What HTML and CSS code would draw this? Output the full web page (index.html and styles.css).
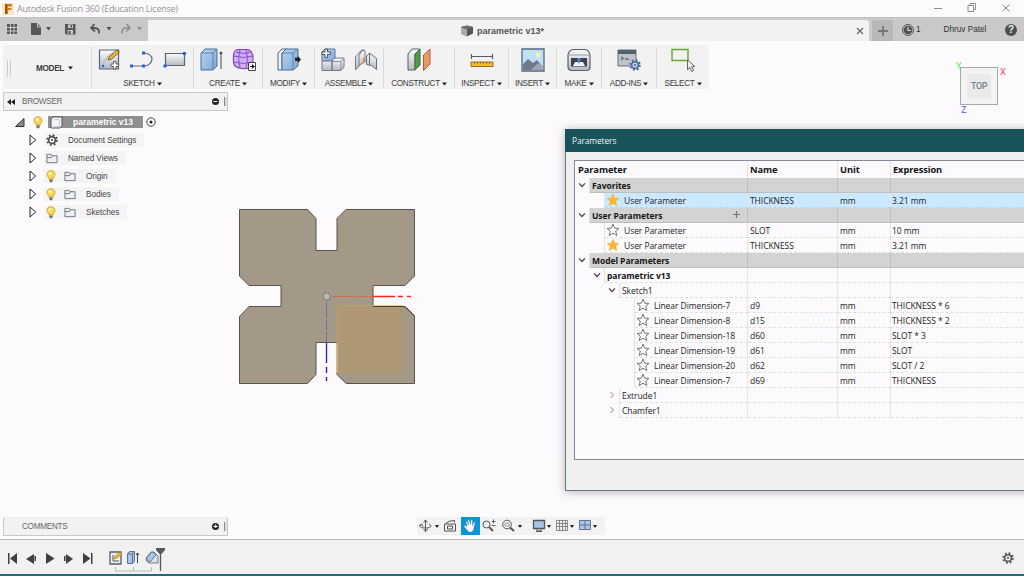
FILE: index.html
```html
<!DOCTYPE html>
<html lang="en">
<head>
<meta charset="utf-8">
<title>Autodesk Fusion 360 (Education License)</title>
<link rel="stylesheet" href="styles.css">
</head>
<body>
<svg class="defs" aria-hidden="true">
  <defs>
    <linearGradient id="steel" x1="0" y1="0" x2="0" y2="1"><stop offset="0" stop-color="#fafbfd"/><stop offset="1" stop-color="#b4b9c2"/></linearGradient>
    <linearGradient id="blue" x1="0" y1="0" x2="1" y2="1"><stop offset="0" stop-color="#b9d5f2"/><stop offset="1" stop-color="#7ca8d8"/></linearGradient>
    <symbol id="star" viewBox="0 0 14 14"><path d="M7 1 8.7 5.2 13 5.4 9.7 8.2 10.8 12.6 7 10.2 3.2 12.6 4.3 8.2 1 5.4 5.3 5.2Z" stroke-linejoin="miter"/></symbol>
    <symbol id="down" viewBox="0 0 8 8"><path d="M1 2.3 4 5.5 7 2.3" fill="none" stroke="#444" stroke-width="1.2"/></symbol>
    <symbol id="right" viewBox="0 0 8 8"><path d="M2.5 1 5.5 4 2.5 7" fill="none" stroke="#888" stroke-width="1"/></symbol>
    <symbol id="bulb" viewBox="0 0 10 13"><path d="M5 .7C2.5.7 1 2.4 1 4.5c0 2 1.6 2.6 2 4.5h4c.4-1.900 2-2.500 2-4.500C9 2.400 7.500.7 5 .7Z" fill="#fbd84b" stroke="#c49b35" stroke-width=".8"/><circle cx="4" cy="3.500" r="1.500" fill="#fff6b8"/><path d="M3.200 9.500h3.600v2H6L5.500 12.500h-1L4 11.500h-.8Z" fill="#77736b"/></symbol>
    <symbol id="folder" viewBox="0 0 13 11"><path d="M1 10V1h4.500l1 1.500H12V10Z" fill="#eceff3" stroke="#68727f"/><path d="M1 4.500h5l1-2" fill="none" stroke="#68727f"/></symbol>
    <symbol id="gear" viewBox="0 0 14 14"><circle cx="7" cy="7" r="5.600" fill="none" stroke="currentColor" stroke-width="2.200" stroke-dasharray="2.200 2.198"/><circle cx="7" cy="7" r="3.900" fill="none" stroke="currentColor" stroke-width="1.800"/><circle cx="7" cy="7" r="1.300" fill="currentColor"/></symbol>
    <symbol id="tri" viewBox="0 0 8 12"><path d="M1 1v10l5.700-5Z" fill="#fcfafc" stroke="#222" stroke-width="1"/></symbol>
    <symbol id="caret" viewBox="0 0 5 4"><path d="M0 .5h5L2.500 3.500Z" fill="currentColor"/></symbol>
  </defs>
</svg>

<div class="app">
  <header class="titlebar">
    <svg class="logo" width="12" height="12" viewBox="0 0 12 12"><rect width="12" height="12" fill="#f8e6cc"/><path d="M3 1h7v2.500H6V5h3.500v2H6v4H3Z" fill="#d97816"/><path d="M3 1h2v10H3Z" fill="#9b5414"/></svg>
    <span class="app-name">Autodesk Fusion 360 (Education License)</span>
    <svg class="win-btns" width="78" height="12" viewBox="0 0 78 12" fill="none" stroke="#8d8b8e"><path d="M1 7.500h8"/><path d="M35 4.500h5.500v6H35ZM37 4V2.500h5.500v6H41M69.500 3.500l7 7m0-7-7 7"/></svg>
  </header>

  <div class="tabbar">
    <div class="quick">
      <svg width="148" height="24" viewBox="0 0 148 24">
        <path d="M7 7h3v3H7ZM11 7h2.500v3H11ZM14.500 7h2.500v3h-2.500ZM7 11h3v2.500H7ZM11 11h2.500v2.500H11ZM14.500 11h2.500v2.500h-2.500ZM7 14.500h3V17H7ZM11 14.500h2.500V17H11ZM14.500 14.500h2.500V17h-2.500Z" fill="#565656"/>
        <path d="M31 6h6l4 4v8H31Z" fill="#565656"/><path d="M37.500 6v4H41" fill="none" stroke="#c8c8c8"/>
        <path d="M46 10h5l-2.500 3.500ZM106.500 10h5l-2.500 3.500Z" fill="#505050"/><path d="M137 10h5l-2.500 3.500Z" fill="#8e8e8e"/>
        <path d="M65 7h10.500v10.500H66L65 16.500Z" fill="#565656"/><path d="M68 7.500h5v3.500h-5ZM67.500 13h5.500v4h-5.500Z" fill="#c8c8c8"/><path d="M68.500 14h2v3h-2ZM70.500 8h1.500v2.500h-1.500Z" fill="#565656"/>
        <path d="M94.500 7 91 11l4 3.500M91 11h4.500q4 .5 3.500 5.500" fill="none" stroke="#565656" stroke-width="1.800"/>
        <path d="M126.500 7l3.500 4-4 3.500M130 11h-4.500q-4 .5-3.500 5.500" fill="none" stroke="#8e8e8e" stroke-width="1.600"/>
      </svg>
    </div>
    <div class="doc-tab">
      <svg width="12" height="12" viewBox="0 0 12 12"><path d="M0 2 6 .5 12 2v6.500L6 11.500 0 8.500Z" fill="#555"/><path d="M0 2l6 2.500v7L0 8.500Z" fill="#aaa"/><path d="M0 2 6 .5 12 2 6 4.500Z" fill="#6d6d6d"/></svg>
      <span class="doc-name">parametric v13*</span>
      <svg class="tab-close" width="8" height="8" viewBox="0 0 8 8"><path d="M1 1l6 6m0-6L1 7" stroke="#666" stroke-width="1.200"/></svg>
    </div>
    <div class="tab-add"><svg width="12" height="12" viewBox="0 0 12 12"><path d="M6 1v10M1 6h10" stroke="#777" stroke-width="1.800"/></svg></div>
    <div class="account">
      <svg width="12" height="12" viewBox="0 0 12 12"><circle cx="6" cy="6" r="5.500" fill="none" stroke="#555"/><circle cx="6" cy="6" r="4.300" fill="#505050"/><path d="M6 3v3.500h3" fill="none" stroke="#ddd" stroke-width="1.200"/></svg>
      <span class="jobs">1</span><span class="user">Dhruv Patel</span>
      <span class="help">?</span>
    </div>
  </div>

  <main class="workspace">
    <nav class="toolbar">
      <div class="workspace-switch"><i class="grip"></i><b>MODEL</b><svg class="car" ><use href="#caret"/></svg></div>
      <div class="group"><div class="icons wide">
        <svg width="23" height="24" viewBox="0 0 23 24"><path d="M1.500 2h19v19h-19Z" fill="url(#steel)" stroke="#5e6470" stroke-width="1.200"/><path d="M5 18C6 11 10 7 16 5" fill="none" stroke="#a8adb6"/><path d="M10 12l1-3 8-7 2.500 2-8 7Z" fill="#f5b631" stroke="#554b33" stroke-width=".8"/><circle cx="5" cy="18" r="1.300" fill="#2264d6"/><path d="M15.500 13.500H18V16h2.500v2.500H18V21h-2.500v-2.500H13V16h2.500Z" fill="#fff" stroke="#555" stroke-width=".9"/></svg>
        <svg width="24" height="24" viewBox="0 0 24 24"><path d="M2 18h11M13 5c6 0 9 3 9 6s-3 7-8 7" fill="none" stroke="#606977" stroke-width="1.200"/><path d="M0 16.500h3V19.500H0ZM12 3.500h3V6.500H12ZM12 16.500h3V19.500H12Z" fill="#2264d6"/></svg>
        <svg width="24" height="24" viewBox="0 0 24 24"><path d="M2.500 5.500h19v12h-19Z" fill="url(#steel)" stroke="#5e6470" stroke-width="1.200"/><path d="M20 4h3V7H20ZM.5 16.500h3V19.500h-3Z" fill="#2264d6"/></svg>
      </div><span class="label">SKETCH<svg class="car"><use href="#caret"/></svg></span></div>
      <div class="group"><div class="icons wide">
        <svg width="23" height="24" viewBox="0 0 23 24"><path d="M1 5 5 1h12v17l-4 4H1Z" fill="url(#blue)" stroke="#4f6c90"/><path d="M1 5h12v17M13 5l4-4" fill="none" stroke="#5f7ea5"/><path d="M21 21V5" stroke="#444"/><path d="M21 3l1.800 3h-3.600Z" fill="#444"/></svg>
        <svg width="24" height="24" viewBox="0 0 24 24"><path d="M6 1.500h10q5 2 5 8t-2 9-9 2-8-4-.5-9T6 1.500Z" fill="#cfaef3" stroke="#7d43bd" stroke-width="1.100"/><path d="M8 2q-3 8 0 18M14 2q3 8 0 18M2 8q9 3 19 0M2 14q9 3 19 0M4 4q8 3 15 0" fill="none" stroke="#8850c4"/><path d="M16.500 14.500h7v8h-7Z" fill="#fff" stroke="#444"/><path d="M18 18h2v-2l3 2.500-3 2.500v-2h-2Z" fill="#222"/></svg>
      </div><span class="label">CREATE<svg class="car"><use href="#caret"/></svg></span></div>
      <div class="group"><div class="icons">
        <svg width="24" height="24" viewBox="0 0 24 24"><path d="M1 5 5 1h5L5 5v17H1Z" fill="#eef1f5" stroke="#566272"/><path d="M5 5l4-4h12v17l-5 4H5Z" fill="url(#blue)" stroke="#4f6c90"/><path d="M5 5h11v17M16 5l5-4" fill="none" stroke="#5f7ea5"/><path d="M18 9.500h3V8l3 3.500-3 3.500v-2h-3Z" fill="#222"/></svg>
      </div><span class="label">MODIFY<svg class="car"><use href="#caret"/></svg></span></div>
      <div class="group"><div class="icons wide">
        <svg width="24" height="24" viewBox="0 0 24 24"><path d="M1 13V4l3-3h10v9l-3 3Z" fill="url(#blue)" stroke="#5c7698"/><path d="M1 13h10V22.500H1ZM11 13l3-3h9v9l-3 3.500h-9Z" fill="url(#steel)" stroke="#747b86"/><path d="M11 13.500h9v8.500M20 13.500l3-3.500" fill="none" stroke="#878e99"/><path d="M4 1h2.500v3H9.500v2.500H6.500v3H4v-3H1V4h3Z" fill="#fff" stroke="#444" stroke-width=".9"/></svg>
        <svg width="24" height="24" viewBox="0 0 24 24"><path d="M1.500 9 7 2.500q3-2 4 .5v11l-4 2-5.500 6Z" fill="url(#steel)" stroke="#747b86"/><path d="M5 18V8q1-5 5-6" fill="none" stroke="#747b86"/><path d="M9.500 15v-5" stroke="#ed8038" stroke-width="1.500"/><path d="M12.500 8l3-3 7 5.500v11l-5-4-5-1Z" fill="url(#steel)" stroke="#656d78"/><path d="M15.500 5v12" stroke="#656d78"/></svg>
      </div><span class="label">ASSEMBLE<svg class="car"><use href="#caret"/></svg></span></div>
      <div class="group"><div class="icons">
        <svg width="24" height="24" viewBox="0 0 24 24"><path d="M1 6 5 1h8L8 6v16H1Z" fill="url(#steel)" stroke="#59616c"/><path d="M8 6l5-5v16l-5 5Z" fill="#559a48" stroke="#3e6a35"/><path d="M16.500 7 23 1v15l-6.500 6.500Z" fill="#e99767" stroke="#ad633b"/></svg>
      </div><span class="label">CONSTRUCT<svg class="car"><use href="#caret"/></svg></span></div>
      <div class="group"><div class="icons">
        <svg width="24" height="24" viewBox="0 0 24 24"><path d="M1.500 6v5m21-5v5m-21-2.500h21" stroke="#555d68" stroke-width="1.200"/><path d="M1 14h22v4.500H1Z" fill="#f8bd30" stroke="#9b6b18"/><path d="M4.500 14v2m3-2v2m3-2v2m3-2v2m3-2v2m3-2v2" stroke="#8b691f" stroke-width=".8"/></svg>
      </div><span class="label">INSPECT<svg class="car"><use href="#caret"/></svg></span></div>
      <div class="group"><div class="icons">
        <svg width="24" height="24" viewBox="0 0 24 24"><path d="M1 1h22v22H1Z" fill="#bfe1f4" stroke="#596779" stroke-width="1.300"/><circle cx="17" cy="7" r="2.300" fill="#fff2a3"/><path d="M2 16l5-5 5 4 4-3 6 7v3H2Z" fill="#6f7988"/><path d="M10 22l5-5 3-2 4 3v4Z" fill="#9ca5b0"/></svg>
      </div><span class="label">INSERT<svg class="car"><use href="#caret"/></svg></span></div>
      <div class="group"><div class="icons">
        <svg width="24" height="24" viewBox="0 0 24 24"><path d="M1 7q1-5 5-5.500h12q4 .5 5 5.500v12q0 3-3 3.500H4q-3-.5-3-3.500Z" fill="url(#steel)" stroke="#59616c" stroke-width="1.200"/><path d="M1 7h22" stroke="#9aa1aa"/><path d="M4 10h16v8.500H4Z" fill="#3b424c"/><path d="M6 18l2-4h8l2 4Z" fill="#eef1f4"/><path d="M10 10h4l-1 4-1 2-1-2Z" fill="#5283c5"/></svg>
      </div><span class="label">MAKE<svg class="car"><use href="#caret"/></svg></span></div>
      <div class="group"><div class="icons">
        <svg width="24" height="24" viewBox="0 0 24 24"><path d="M1 2h18v16H1Z" fill="#bdc3cc" stroke="#68717e"/><path d="M1 2h18v4H1Z" fill="#59616d"/><path d="M4 9l2.500 1.500L4 12M8 11h4" fill="none" stroke="#444"/><g color="#466796"><circle cx="18" cy="17" r="5" fill="#c8d7eb"/><use href="#gear" x="12" y="11" width="12" height="12"/></g></svg>
      </div><span class="label">ADD-INS<svg class="car"><use href="#caret"/></svg></span></div>
      <div class="group last"><div class="icons">
        <svg width="24" height="24" viewBox="0 0 24 24"><path d="M1 1.500h16v11H1Z" fill="none" stroke="#63a936" stroke-width="1.400"/><path d="M16.500 12v10l2.200-2.500 2 4 2-1-2-3.700 3-.5Z" fill="#eee" stroke="#666"/></svg>
      </div><span class="label">SELECT<svg class="car"><use href="#caret"/></svg></span></div>
    </nav>

    <section class="panel browser-head"><svg width="8" height="6" viewBox="0 0 8 6"><path d="M4 0v6L0 3ZM8 0v6L4 3Z" fill="#222"/></svg><span class="panel-name">BROWSER</span><i class="round">−</i><i class="edge"></i></section>
    <ul class="tree">
      <li class="root"><svg width="10" height="9" viewBox="0 0 10 9"><path d="M9 .5v8H.5Z" fill="#888" stroke="#333"/></svg><svg class="bulb"><use href="#bulb"/></svg><span class="selected"><svg width="13" height="13" viewBox="0 0 13 13"><path d="M1 3 3 1h9v9l-2 2H1Z" fill="#f3f4f6" stroke="#555"/><path d="M3.500 3.500h6v7h-6" fill="none" stroke="#c9cdd3"/></svg><b>parametric v13</b></span><svg class="radio" width="10" height="10" viewBox="0 0 10 10"><circle cx="5" cy="5" r="4.200" fill="#fafafa" stroke="#444"/><circle cx="5" cy="5" r="1.500" fill="#222"/></svg></li>
      <li><svg class="tri"><use href="#tri"/></svg><span class="node"><svg class="gear"><use href="#gear"/></svg><span>Document Settings</span></span></li>
      <li><svg class="tri"><use href="#tri"/></svg><span class="node"><svg class="folder"><use href="#folder"/></svg><span class="views">Named Views</span></span></li>
      <li><svg class="tri"><use href="#tri"/></svg><span class="node"><svg class="bulb"><use href="#bulb"/></svg><svg class="folder"><use href="#folder"/></svg><span>Origin</span></span></li>
      <li><svg class="tri"><use href="#tri"/></svg><span class="node"><svg class="bulb"><use href="#bulb"/></svg><svg class="folder"><use href="#folder"/></svg><span>Bodies</span></span></li>
      <li><svg class="tri"><use href="#tri"/></svg><span class="node"><svg class="bulb"><use href="#bulb"/></svg><svg class="folder"><use href="#folder"/></svg><span>Sketches</span></span></li>
    </ul>

    <svg class="model" width="178" height="178" viewBox="0 0 178 178">
      <path d="M1.500 1.500H69.500l8.500 9V42.500H99V10.500l9-9h68.500V68l-9.500 9.500H135V98.500h32l9.500 9.500v67.500H108l-9-9V134.500H78v32l-8.500 9h-68v-67L11 98.500H43V77.500H11L1.500 68Z" fill="#a49989" stroke="#54554c"/>
      <path d="M99 97.500h66v67H99Z" fill="#ae9873"/><path d="M99.500 164.500V97.500h65" fill="none" stroke="#c9a568" stroke-width=".6"/><path d="M99 164.500v-30M135 97.500h30" fill="none" stroke="#efc987"/><path d="M135 98.500h32l9.500 9.500" fill="none" stroke="#3e4038"/>
      <path d="M94 88.500h41" stroke="#c96f45" stroke-dasharray="25 2 8 2"/><path d="M135 88.500h22m3 0h5m4 0h4" stroke="#ff2510" stroke-width="1.300"/>
      <path d="M88.500 94v40" stroke="#77719a" stroke-dasharray="16 2 10 2"/><path d="M88.500 135v20m0 4v6m0 4v4" stroke="#2510ee" stroke-width="1.300"/>
      <circle cx="88.700" cy="88.500" r="3.700" fill="#b9b9ac" stroke="#77786d"/>
    </svg>

    <div class="viewcube"><div class="cube-face"><span>TOP</span></div><i class="axis x">X</i><i class="axis y">Y</i><i class="axis z">Z</i></div>

    <div class="bottom">
      <section class="panel comments"><span class="panel-name">COMMENTS</span><i class="round">+</i><i class="edge"></i></section>
      <div class="navbar">
        <svg width="188" height="18" viewBox="0 0 188 18" fill="none" stroke="#555">
          <path d="M8.500 3v12M6.500 5.500l2-2.500 2 2.500M4.500 7.500c-3 2-1 3.500 4 3.500s7.500-2 3.500-4M2 9l2.500-2 1.500 2.500M11 12l-2.500 2-2-1.500"/><path d="M18 8h4l-2 3ZM101 8h4l-2 3ZM130 8h4l-2 3ZM153 8h4l-2 3ZM176 8h4l-2 3Z" fill="#222" stroke="none"/>
          <path d="M27.500 7h11v7h-11ZM28.500 6.500q3-3 9-3v2M30.500 9h5v3h-5Z"/>
          <path d="M44 0h19v18H44Z" fill="#0696d7" stroke="none"/><path d="M51 14 47 9.500q0-1.500 1.500-.8l1.500 1L49 5q0-1.500 1-.8l1.500 4L51 3.500q.5-1.500 1.500 0l1 4L54 3q1-1 1.500.5v5L57 5q1.500-.5 1 1l-1.500 6.500L55 15h-3.500Z" fill="#fff" stroke="#69818f" stroke-width=".5"/>
          <circle cx="69.500" cy="7.500" r="3.500"/><path d="M72 10l4 4" stroke-width="2"/><path d="M74.500 4.500h4m-2-2v4m-2 2h4" stroke-width=".9"/>
          <circle cx="90" cy="7.500" r="4.300"/><path d="M88 6h4v3h-4Z" stroke="#999"/><path d="M93 10.500l4 3.500" stroke-width="2"/>
          <path d="M116.500 3.500h11v8h-11Z" fill="#a9c4e5" stroke-width="1.300"/><path d="M120 12v2h4v-2m-5 2.500h6"/>
          <path d="M139.500 3.500h11v10h-11ZM142.500 3v11m3-11v11m3-11v11M139 6.500h12m-12 3h12" stroke="#737373" stroke-width=".8"/>
          <path d="M162.500 3.500h11v9h-11Z" fill="#abc5e7" stroke="#60758f"/><path d="M168 3v10m-6-5h12" stroke="#60758f"/>
        </svg>
      </div>
    </div>

    <section class="dialog">
      <h2>Parameters</h2>
      <div class="grid">
        <div class="row head"><span class="c1">Parameter</span><span class="c2">Name</span><span class="c3">Unit</span><span class="c4">Expression</span></div>
        <div class="row sec"><span class="tw d1"><svg><use href="#down"/></svg></span><span class="c1">Favorites</span><span class="c2"></span><span class="c3"></span><span class="c4"></span></div>
        <div class="row hot"><span class="tw d2"></span><span class="c1 par"><svg class="star on"><use href="#star"/></svg>User Parameter</span><span class="c2">THICKNESS</span><span class="c3">mm</span><span class="c4">3.21 mm</span></div>
        <div class="row sec"><span class="tw d1"><svg><use href="#down"/></svg></span><span class="c1">User Parameters<svg class="plus" width="9" height="9" viewBox="0 0 9 9"><path d="M4.500 1v7M1 4.500h7" stroke="#777" stroke-width="1.200"/></svg></span><span class="c2"></span><span class="c3"></span><span class="c4"></span></div>
        <div class="row"><span class="tw d2"></span><span class="c1 par"><svg class="star"><use href="#star"/></svg>User Parameter</span><span class="c2">SLOT</span><span class="c3">mm</span><span class="c4">10 mm</span></div>
        <div class="row"><span class="tw d2"></span><span class="c1 par"><svg class="star on"><use href="#star"/></svg>User Parameter</span><span class="c2">THICKNESS</span><span class="c3">mm</span><span class="c4">3.21 mm</span></div>
        <div class="row sec"><span class="tw d1"><svg><use href="#down"/></svg></span><span class="c1">Model Parameters</span><span class="c2"></span><span class="c3"></span><span class="c4"></span></div>
        <div class="row"><span class="tw d2"><svg><use href="#down"/></svg></span><span class="c1 strong">parametric v13</span><span class="c2"></span><span class="c3"></span><span class="c4"></span></div>
        <div class="row"><span class="tw d3"><svg><use href="#down"/></svg></span><span class="c1">Sketch1</span><span class="c2"></span><span class="c3"></span><span class="c4"></span></div>
        <div class="row"><span class="tw d4"></span><span class="c1 par"><svg class="star"><use href="#star"/></svg>Linear Dimension-7</span><span class="c2">d9</span><span class="c3">mm</span><span class="c4">THICKNESS * 6</span></div>
        <div class="row"><span class="tw d4"></span><span class="c1 par"><svg class="star"><use href="#star"/></svg>Linear Dimension-8</span><span class="c2">d15</span><span class="c3">mm</span><span class="c4">THICKNESS * 2</span></div>
        <div class="row"><span class="tw d4"></span><span class="c1 par"><svg class="star"><use href="#star"/></svg>Linear Dimension-18</span><span class="c2">d60</span><span class="c3">mm</span><span class="c4">SLOT * 3</span></div>
        <div class="row"><span class="tw d4"></span><span class="c1 par"><svg class="star"><use href="#star"/></svg>Linear Dimension-19</span><span class="c2">d61</span><span class="c3">mm</span><span class="c4">SLOT</span></div>
        <div class="row"><span class="tw d4"></span><span class="c1 par"><svg class="star"><use href="#star"/></svg>Linear Dimension-20</span><span class="c2">d62</span><span class="c3">mm</span><span class="c4">SLOT / 2</span></div>
        <div class="row"><span class="tw d4"></span><span class="c1 par"><svg class="star"><use href="#star"/></svg>Linear Dimension-7</span><span class="c2">d69</span><span class="c3">mm</span><span class="c4">THICKNESS</span></div>
        <div class="row"><span class="tw d3"><svg><use href="#right"/></svg></span><span class="c1">Extrude1</span><span class="c2"></span><span class="c3"></span><span class="c4"></span></div>
        <div class="row"><span class="tw d3"><svg><use href="#right"/></svg></span><span class="c1">Chamfer1</span><span class="c2"></span><span class="c3"></span><span class="c4"></span></div>
      </div>
    </section>
  </main>

  <footer class="timeline">
    <svg width="170" height="34" viewBox="0 0 170 34">
      <g fill="#3d3f40"><path d="M8 13h1.500v11H8ZM17 13v11l-7-5.500ZM34 14v10l-8-5ZM34.500 16h1.500v5h-1.500ZM46 13v11l8.500-5.500ZM64 16h1.500v5H64ZM66 14v10l7-5ZM83 13v11l7.500-5.500ZM91 13h1.500v11H91Z"/></g>
      <path d="M110 12h11v12h-11Z" fill="#edf0f4" stroke="#555c67" stroke-width="1.300"/><path d="M113 15v6h6" fill="none" stroke="#555"/><path d="M114 19l1-3 5-4 2 2-5 4Z" fill="#f5b82c" stroke="#8d6b24" stroke-width=".5"/>
      <path d="M127.500 14l2-2.500h5V21l-2 2.500h-5Z" fill="#a8c5e7" stroke="#5b7699"/><path d="M127.500 14h5v9.500M132.500 14l2-2.500" fill="none" stroke="#5b7699"/><path d="M137.500 23V13m-1.500 2 1.500-2 1.500 2" fill="none" stroke="#444"/>
      <path d="M146 18l5-6h3l4 4v7h-9q-3-1-3-5Z" fill="#dce1e8" stroke="#737e8d"/><path d="M146.500 18l5-6q3 0 4.500 3l-6 7q-3-1-3.500-4Z" fill="#a8c5e7" stroke="#5b7699"/>
      <path d="M156 8h9v2l-3.500 4h-2L156 10Z" fill="#5a5a5a"/><path d="M160.500 12v19" stroke="#555" stroke-width="1.300"/>
      <path d="M115.500 27v4h36v-4M133.500 27v4" fill="none" stroke="#b9b9b9"/>
    </svg>
    <svg class="gear"><use href="#gear"/></svg>
  </footer>
</div>
</body>
</html>
```

FILE: styles.css
```css
* { box-sizing: border-box; }
body { margin: 0; overflow: hidden; background: #fcfafd; font-family: "Liberation Sans", Arial, sans-serif; font-size: 8.2px; color: #3c3c3c; }
i { font-style: normal; }
svg { display: block; flex: none; }
.defs { position: absolute; width: 0; height: 0; }
.app { width: 1024px; height: 576px; display: flex; flex-direction: column; }

.titlebar { height: 17px; display: flex; align-items: center; padding: 0 10px 0 2px; }
.app-name { margin-left: 3px; font-family: "Open Sans", "Noto Sans", sans-serif; font-size: 9px; letter-spacing: -.24px; color: #969396; white-space: nowrap; }
.win-btns { margin: 0 3px 3px auto; }

.tabbar { height: 24px; display: flex; align-items: flex-end; background: #c9c9c9; border-top: 1px solid #c0c0c0; }
.quick { width: 148px; height: 24px; }
.doc-tab { width: 721px; height: 21px; position: relative; display: flex; align-items: center; justify-content: center; gap: 4px; padding-right: 12px; background: #f2f2f2; border-radius: 0 3px 0 0; }
.doc-name { font-size: 9px; font-weight: bold; color: #555; }
.tab-close { position: absolute; right: 5px; top: 7px; }
.tab-add { width: 21px; height: 21px; margin-left: 3px; display: grid; place-items: center; background: #b8b8b8; border-radius: 3px 3px 0 0; }
.account { flex: 1; height: 23px; display: flex; align-items: center; padding-left: 9px; color: #333; }
.jobs { margin-left: 2px; }
.user { margin-left: 23px; font-size: 8.2px; white-space: nowrap; }
.help { width: 12px; height: 12px; margin-left: auto; margin-right: 7px; border-radius: 50%; background: #4e4e4e; color: #eee; font-weight: bold; font-size: 10px; line-height: 12px; text-align: center; }

.workspace { position: relative; flex: 1; display: flex; flex-direction: column; align-items: flex-start; min-height: 0; }
.toolbar { height: 44px; margin: 4px 0 0 3px; display: grid; grid-template-columns: 89px 102px 69px 52px 69px 71px 54px 48px 45px 55px 52px; background: #f2f2f2; }
.workspace-switch { display: flex; align-items: center; padding: 0 0 0 4px; margin: 2px 0; border-right: 1px solid #d5dada; }
.workspace-switch b { margin: 0 4px 0 25px; font-size: 8.2px; letter-spacing: -.3px; }
.grip { width: 4px; height: 17px; border: solid #ccc; border-width: 0 1px; }
.car { width: 5px; height: 4px; color: #222; }
.group { display: flex; flex-direction: column; align-items: center; margin: 2px 0; border-right: 1px solid #d5dada; }
.group.last { border: 0; }
.icons { display: flex; gap: 9px; height: 26px; padding-top: 1px; }
.label { display: flex; align-items: center; gap: 2px; margin-top: 6px; line-height: 10px; letter-spacing: -.3px; white-space: nowrap; }

.panel { width: 225px; height: 19px; display: flex; align-items: center; background: #f2f2f2; border: 1px solid #c9c9c9; }
.browser-head { margin: 3px 0 0 3px; padding-left: 3px; }
.panel-name { margin-left: 7px; color: #666; letter-spacing: -.3px; margin-bottom: 1px; }
.round { width: 7px; height: 7px; margin-left: auto; border-radius: 50%; background: #222; color: #fff; font-weight: bold; font-size: 8px; line-height: 7px; text-align: center; }
.edge { width: 3px; height: 9px; margin: 0 0 0 5px; border-left: 1px solid #888; background: #ddd; }

.tree { list-style: none; margin: 2px 0 0; padding: 0; }
.tree li { height: 18px; padding-left: 29px; display: flex; align-items: center; color: #444; }
.tree .root { padding-left: 15px; }
.bulb { width: 10px; height: 13px; }
.root .bulb { margin: 0 5px 0 8px; }
.selected { width: 95px; height: 12px; display: flex; align-items: center; padding-left: 2px; background: #8f8f8f; color: #fff; }
.selected b { margin-left: 10px; font-size: 8.5px; white-space: nowrap; }
.radio { margin-left: 3px; }
.tri { width: 8px; height: 12px; margin-right: 7px; }
.node { height: 14px; display: flex; align-items: center; padding: 0 8px 0 2px; background: #f5f4f5; white-space: nowrap; }
.gear { width: 12px; height: 12px; color: #484b4c; }
.folder { width: 12px; height: 11px; }
.node .bulb + .folder { margin-left: 8px; }
.node > span { margin-left: 10px; letter-spacing: -.05px; }

.model { position: absolute; left: 238px; top: 167px; }
.viewcube { position: absolute; left: 960px; top: 26px; width: 38px; height: 38px; }
.cube-face { width: 38px; height: 38px; border: 1px solid #a5aaae; background: #f4f3f4; display: grid; place-items: center; }
.cube-face span { width: 24px; height: 24px; display: grid; place-items: center; background: #e9eaec; color: #7a8188; font: 500 9px Roboto, sans-serif; letter-spacing: -.5px; }
.axis { position: absolute; font: 500 9px/9px Roboto, sans-serif; }
.x { left: 40px; top: 1px; color: #f06d71; }
.y { left: -4px; top: -5px; color: #7bea7d; }
.z { left: 1px; top: 39px; color: #7378ef; }

.bottom { margin-top: auto; padding: 0 0 3px 3px; display: flex; align-items: flex-end; }
.comments { padding-left: 11px; border-top-color: #eee; }
.navbar { height: 18px; margin: 0 0 1px 189px; background: #f3f2f3; }

.dialog { position: absolute; left: 565px; top: 88px; width: 470px; height: 362px; padding: 0 0 0 8px; background: #f0f0f0; border: 1px solid #62797e; box-shadow: 0 1px 9px rgba(80,80,80,.4); font-family: "Open Sans", "Noto Sans", sans-serif; }
.dialog h2 { height: 23px; margin: -1px 0 8px -9px; padding-left: 7px; background: #18535a; color: #eef5f5; font-size: 8.4px; font-weight: normal; line-height: 24px; letter-spacing: -.1px; }
.grid { height: 300px; border: 1px solid #858995; background: #fcfafd; color: #222; }
.row { height: 15px; display: flex; font-size: 8.5px; line-height: 16px; letter-spacing: -.06px; white-space: nowrap; }
.row > span { height: 15px; border-bottom: 1px dashed #e2e1da; border-right: 1px solid #e4e3e6; padding-left: 2px; }
.row > .tw { display: flex; align-items: center; justify-content: flex-end; padding: 0 3px 1px 0; border-bottom: 0; }
.tw svg { width: 8px; height: 8px; }
.d1 { width: 15px; } .d2 { width: 30px; } .d3 { width: 45px; } .d4 { width: 60px; }
.row > .c1 { width: 173px; }
.d1 + .c1 { width: 158px !important; } .d2 + .c1 { width: 143px !important; } .d3 + .c1 { width: 128px !important; } .d4 + .c1 { width: 113px !important; }
.c1 { display: flex; }
.c2 { width: 90px; } .c3 { width: 53px; } .c4 { flex: 1; }
.row > .c4 { padding-left: 1px; }
.row.head { height: 17px; line-height: 17px; font-size: 9.3px; font-weight: bold; letter-spacing: -.1px; color: #111; }
.head > span { height: 17px; padding-left: 3px; border-bottom-color: transparent; }
.head > .c2, .head > .c3, .row.head > .c4 { padding-left: 2px; }
.sec > .tw + .c1, .strong { font-weight: bold; color: #151515; }
.sec > span:not(.tw) { background: #d3d3d3; border-bottom: 1px solid #bfbfbf; border-right-color: #bfbfbf; }
.hot > span:not(.tw) { background: #cce8ff; border-bottom-color: #b9d5e8; }
.star { width: 14px; height: 14px; margin: 0 4px 0 -1px; fill: none; stroke: #777; stroke-width: 1; }
.star.on { fill: #fbb52e; stroke: #f6ab23; stroke-width: .5; }
.plus { margin: 2px 6px 0 auto; }

.timeline { height: 37px; display: flex; align-items: flex-start; justify-content: space-between; padding-right: 10px; background: #f1f1f1; border-top: 1px solid #bcbcbc; border-bottom: 2px solid #276776; }
.timeline .gear { margin-top: 12px; color: #55584f; }
```
